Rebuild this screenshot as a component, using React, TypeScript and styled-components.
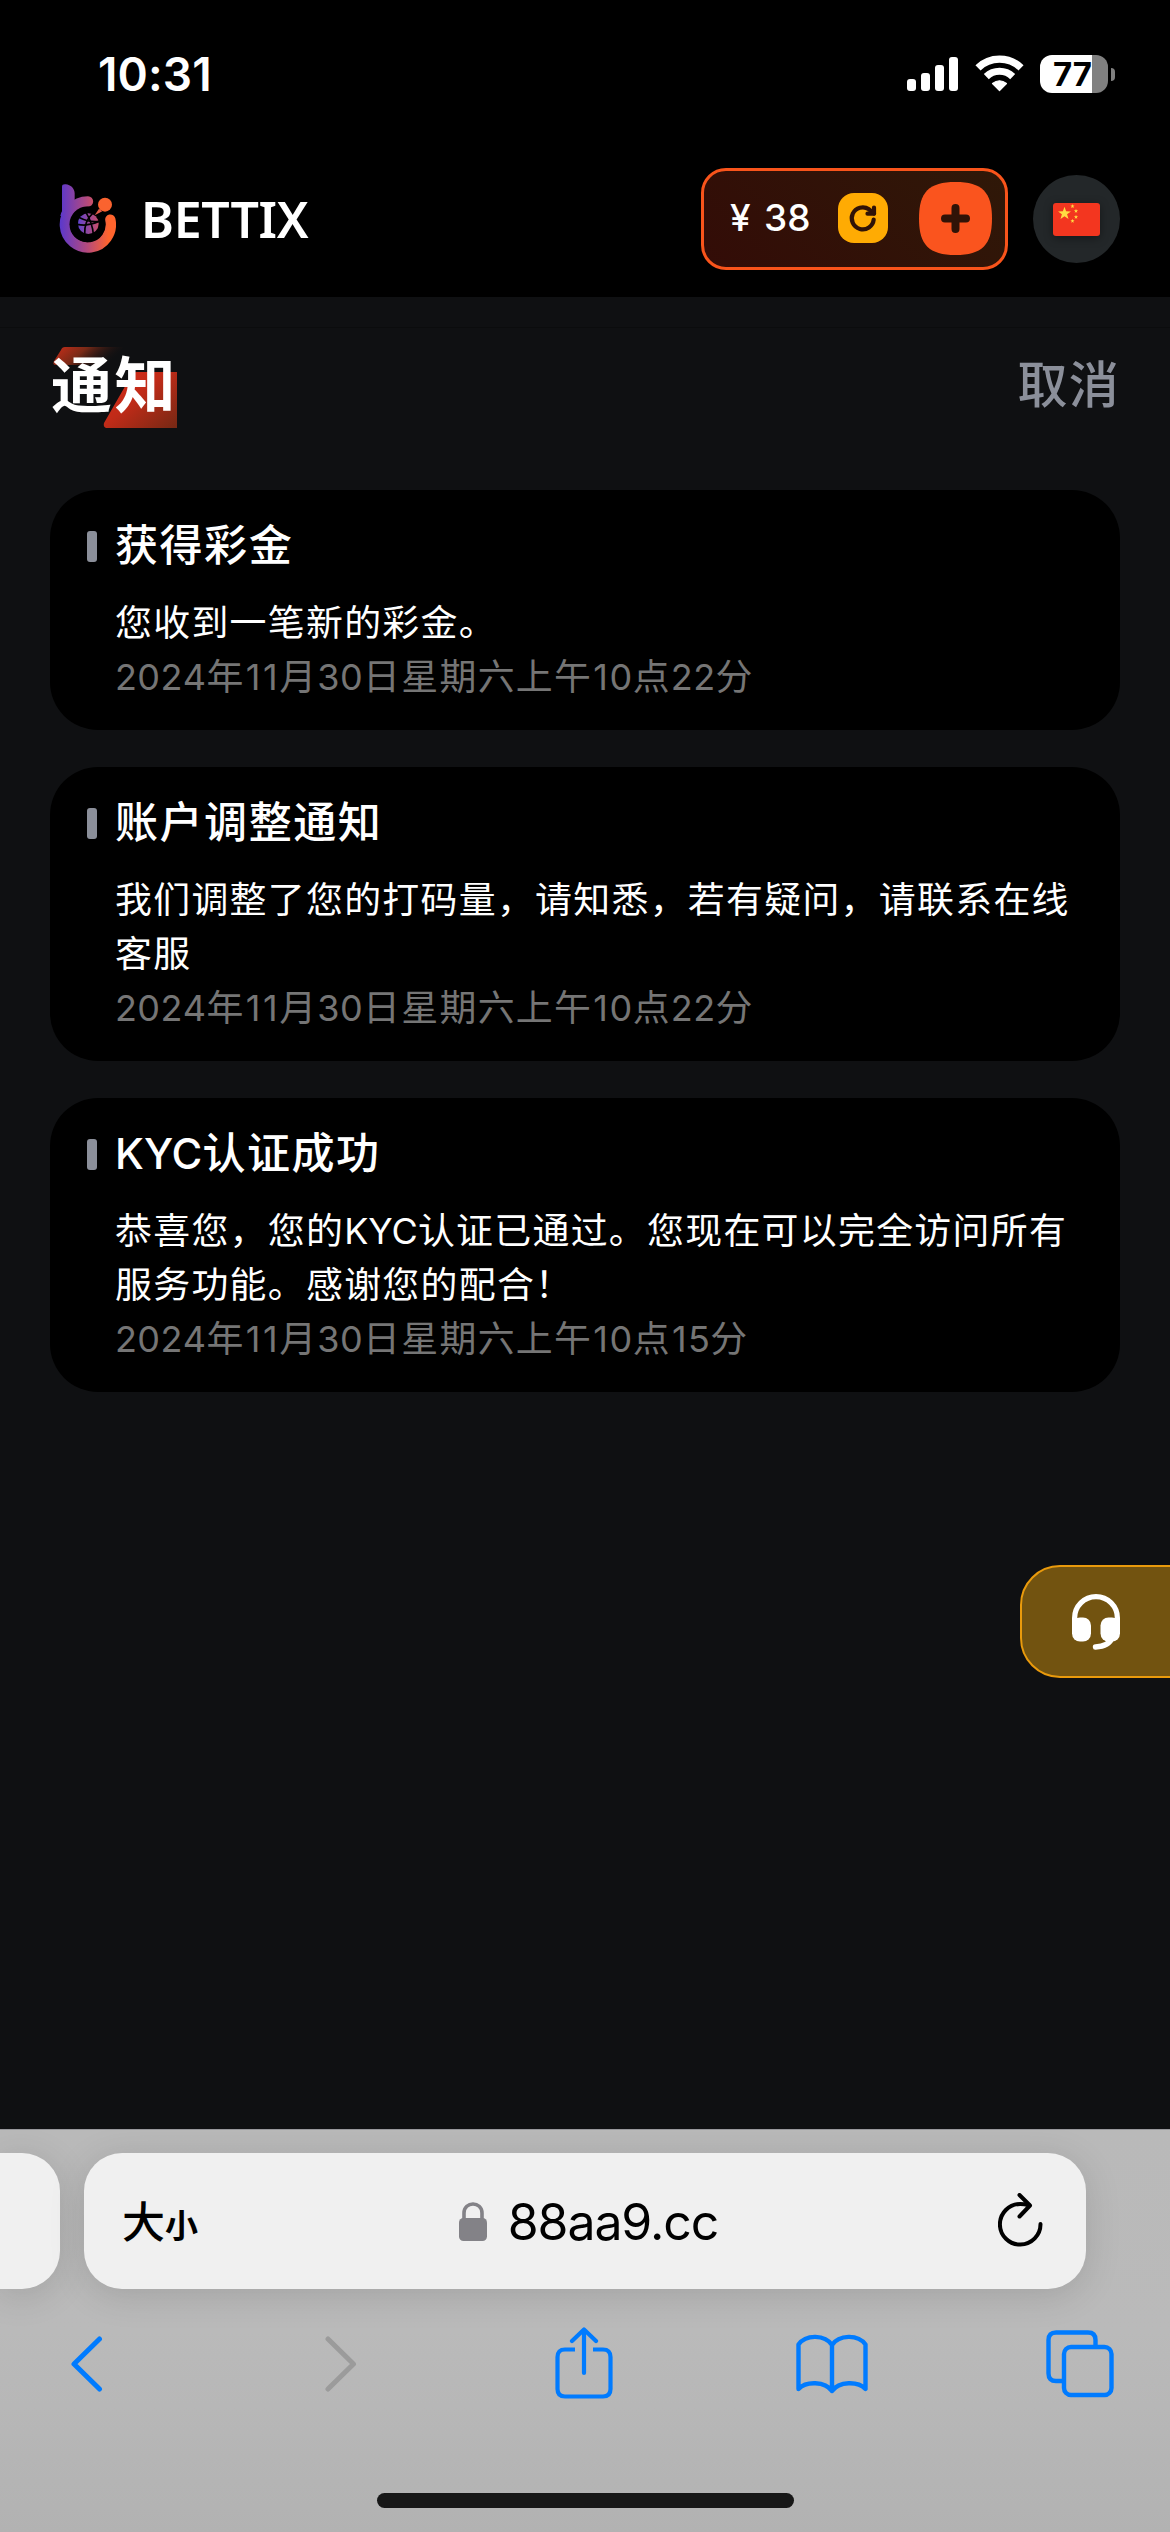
import React from "react";
import styled, { createGlobalStyle } from "styled-components";

const GlobalStyle = createGlobalStyle`
  *, *::before, *::after { box-sizing: border-box; }
  html, body { margin: 0; padding: 0; background: #0f1012; }
  body {
    font-family: Inter, "Noto Sans CJK SC", sans-serif;
    color: #fff;
    overflow: hidden;
  }
  svg { display: block; flex: none; }
`;

const Screen = styled.div`
  width: 1170px;
  height: 2532px;
  display: flex;
  flex-direction: column;
  background: #0f1012;
  overflow: hidden;
`;

const StatusBar = styled.div`
  height: 144px;
  flex: none;
  background: #000;
  display: flex;
  justify-content: space-between;
  padding: 0 55px 0 98px;
`;

const Clock = styled.div`
  padding-top: 46px;
  font-size: 46px;
  line-height: 56px;
  font-weight: 600;
  letter-spacing: 0.1px;
`;

const StatusIcons = styled.div`
  display: flex;
  align-items: flex-start;
  gap: 16.5px;
  padding-top: 55px;
`;

const BatteryWrap = styled.div`
  display: flex;
  align-items: center;
  gap: 3px;
`;

const Battery = styled.div`
  width: 68px;
  height: 38px;
  border-radius: 12px;
  background: linear-gradient(90deg, #fff 0 52px, #808080 52px);
  color: #000;
  font-size: 33px;
  line-height: 38px;
  font-weight: 700;
  padding-left: 13px;
`;

const BatteryCap = styled.div`
  width: 4px;
  height: 13px;
  border-radius: 0 5px 5px 0;
  background: #808080;
`;

const Header = styled.header`
  height: 153px;
  flex: none;
  background: #000;
  display: flex;
  align-items: flex-start;
  justify-content: space-between;
  padding: 24px 50px 0 59px;
`;

const Brand = styled.div`
  display: flex;
  align-items: center;
  gap: 25px;
  padding-top: 16px;
`;

const BrandName = styled.span`
  font-family: "Noto Sans", sans-serif;
  font-weight: 600;
  font-size: 50px;
  line-height: 68px;
  letter-spacing: -0.3px;
`;

const HeaderActions = styled.div`
  display: flex;
  align-items: center;
  gap: 25px;
`;

const Balance = styled.div`
  width: 307px;
  height: 102px;
  border: 3px solid #f9541b;
  border-radius: 25px;
  background: linear-gradient(45deg, #330c07, #2f1808);
  display: flex;
  align-items: center;
  justify-content: space-between;
  padding: 0 13px 2px 26px;
`;

const Amount = styled.span`
  font-size: 37px;
  line-height: 44px;
  font-weight: 550;
  white-space: pre;
  word-spacing: 3.5px;
  width: 92px;
`;

const BalanceButtons = styled.div`
  display: flex;
  align-items: center;
  gap: 31px;
`;

const Refresh = styled.div`
  width: 50px;
  height: 50px;
  border-radius: 16px;
  background: #ffab03;
`;

const Language = styled.div`
  width: 87px;
  height: 88px;
  border-radius: 50%;
  background: #232729;
  display: flex;
  align-items: center;
  justify-content: center;
`;

const Flag = styled.div`
  width: 47px;
  height: 33px;
  border-radius: 3px;
  overflow: hidden;
  background: #f3361f;
  box-shadow: 0 2px 10px rgba(0, 0, 0, 0.4);
`;

const Main = styled.main`
  flex: 1;
  padding: 0 50px;
  display: flex;
  flex-direction: column;
`;

const Hairline = styled.div`
  margin: 30px -50px 0;
  height: 1px;
  flex: none;
  background: #0b0c0d;
`;

const TitleRow = styled.div`
  height: 162px;
  flex: none;
  display: flex;
  align-items: flex-start;
  justify-content: space-between;
  padding-top: 19px;
`;

const TitleBox = styled.div`
  position: relative;
  width: 127px;
  height: 82px;
`;

const TitleArt = styled.svg`
  position: absolute;
  left: 0;
  top: 0;
`;

const Title = styled.h1`
  position: relative;
  margin: 0;
  padding-left: 1px;
  font-size: 61px;
  line-height: 78px;
  font-weight: 700;
  letter-spacing: 2.6px;
  white-space: nowrap;
`;

const Cancel = styled.span`
  font-size: 50px;
  line-height: 76px;
  font-weight: 500;
  letter-spacing: 1.2px;
  color: #8b8f9a;
`;

const CardList = styled.div`
  display: flex;
  flex-direction: column;
  gap: 37px;
`;

const Card = styled.article`
  border-radius: 48px;
  background: #000;
  padding: 28px 37px 26px;
`;

const CardHead = styled.div`
  display: flex;
  align-items: center;
  gap: 18px;
  height: 54px;
  margin-bottom: 24px;
`;

const Marker = styled.i`
  width: 10px;
  height: 31px;
  margin-top: 3px;
  border-radius: 3px;
  background: #8b8f9a;
`;

const CardTitle = styled.h2`
  margin: 0;
  padding-top: 1px;
  font-size: 42px;
  line-height: 54px;
  font-weight: 500;
`;

const CardLine = styled.p<{ $muted?: boolean }>`
  margin: 0 0 0 28px;
  height: 54px;
  font-size: 36px;
  line-height: 54px;
  letter-spacing: ${(p) => (p.$muted ? "0.4px" : "0")};
  font-kerning: ${(p) => (p.$muted ? "none" : "auto")};
  color: ${(p) => (p.$muted ? "#757575" : "#fff")};
  white-space: nowrap;
`;

const Han = styled.span<{ $space: number }>`
  font-size: 1.025em;
  line-height: 1;
  letter-spacing: ${(p) => p.$space}px;
`;

/* Inter's "1" is narrow; a little side bearing evens out the dates. */
const One = styled.span`
  padding: 0 1.1px;
`;

const Support = styled.button`
  position: absolute;
  left: 1020px;
  top: 1565px;
  width: 160px;
  height: 113px;
  display: flex;
  align-items: center;
  border: 2px solid #e99a0c;
  border-radius: 40px 0 0 40px;
  background: #725310;
  padding: 0 0 0 50px;
`;

const BrowserBar = styled.footer`
  height: 403px;
  flex: none;
  border-top: 1px solid #98989c;
  background: linear-gradient(#b9b9b9, #bababa 50%, #b2b2b2);
  overflow: hidden;
  display: flex;
  flex-direction: column;
`;

const AddressRow = styled.div`
  display: flex;
  gap: 24px;
  padding-top: 23px;
`;

const PrevTab = styled.div`
  width: 60px;
  height: 136px;
  border-radius: 0 38px 38px 0;
  background: #f0f0f0;
  box-shadow: 0 6px 36px rgba(0, 0, 0, 0.13);
`;

const Address = styled.div`
  width: 1002px;
  height: 136px;
  border-radius: 38px;
  background: #f0f0f0;
  box-shadow: 0 6px 36px rgba(0, 0, 0, 0.13);
  color: #000;
  display: flex;
  align-items: center;
  justify-content: space-between;
  padding: 0 43px 0 38px;
`;

const TextSize = styled.span`
  display: flex;
  align-items: baseline;
  font-weight: 500;
  font-size: 43px;
  line-height: 60px;
  width: 78px;
  padding-top: 5px;
  small { font-size: 33px; font-weight: 700; }
`;

const Domain = styled.span`
  display: flex;
  align-items: center;
  gap: 21px;
  margin-right: 21px;
  padding-top: 1px;
  font-size: 50px;
  line-height: 60px;
  letter-spacing: -1.1px;
`;

const Toolbar = styled.nav`
  display: flex;
  align-items: center;
  justify-content: space-between;
  height: 80px;
  margin-top: 35px;
  padding: 0 54px 0 52px;
`;

const HomeIndicator = styled.div`
  width: 417px;
  height: 15px;
  margin: 89px auto 0;
  border-radius: 8px;
  background: #171717;
`;

const SignalIcon = () => (
  <svg width="51" height="36" viewBox="0 0 51 36" fill="#fff">
    <rect x="0" y="24" width="9" height="12" rx="3" />
    <rect x="14" y="18" width="9" height="18" rx="3" />
    <rect x="28" y="10" width="9" height="26" rx="3" />
    <rect x="42" y="2" width="9" height="34" rx="3" />
  </svg>
);

const WifiIcon = () => (
  <svg width="49" height="37" viewBox="0 0 49 37" fill="none" stroke="#fff">
    <path d="M3 12.8A31 31 0 0 1 46 12.8" strokeWidth="7.4" />
    <path d="M11.3 21.6A19 19 0 0 1 37.7 21.6" strokeWidth="7.2" />
    <path d="M17.5 28.5Q24.500 23 31.500 28.500L24.500 35.500Z" fill="#fff" stroke="#fff" strokeWidth="1.200" strokeLinejoin="round" />
  </svg>
);

const LogoIcon = () => (
  <svg width="57" height="69" viewBox="57 464 171 207">
    <defs>
      <linearGradient id="brand" gradientUnits="userSpaceOnUse" x1="60" y1="0" x2="222" y2="0">
        <stop offset="0" stopColor="#5b38cc" />
        <stop offset=".5" stopColor="#b44a7d" />
        <stop offset=".9" stopColor="#ff642d" />
      </linearGradient>
      <linearGradient id="ball" x1="0" y1="0" x2="1" y2="0">
        <stop offset="0" stopColor="#6043d0" />
        <stop offset="1" stopColor="#c84d68" />
      </linearGradient>
    </defs>
    <path d="M66 472Q66 464 77 465C92 466 104 478 104 492V512L96 560H61Q62 552 66 546Z" fill="url(#brand)" />
    <path d="M144 516.500A69 69 0 1 0 211 571" fill="none" stroke="url(#brand)" strokeWidth="31" strokeLinecap="round" />
    <circle cx="142" cy="585" r="53.500" fill="#000" />
    <circle cx="145" cy="583" r="31" fill="url(#ball)" />
    <g fill="none" stroke="#000" strokeWidth="5">
      <path d="M112 585Q145 592 177 576" />
      <path d="M138 549Q158 583 160 615" />
      <path d="M158 552Q132 575 134 616" />
      <path d="M119 565Q150 580 178 576" />
    </g>
    <path d="M164 558L177 538L187 546Z" fill="#e05c48" />
    <circle cx="195" cy="526" r="21" fill="#fa632f" />
  </svg>
);

const RefreshIcon = () => (
  <svg width="50" height="50" viewBox="0 0 50 50" fill="none" stroke="#301307" strokeWidth="4.200" strokeLinecap="round" strokeLinejoin="round">
    <path d="M35.700 26.500A11 11 0 1 1 31 16.300L36 20.500" />
    <path d="M36 14.500V20.700H29.500" />
  </svg>
);

const PlusIcon = () => (
  <svg width="73" height="73" viewBox="0 0 73 73">
    <path d="M0 36.500C0 10 10 0 36.500 0S73 10 73 36.500S63 73 36.500 73S0 63 0 36.500Z" fill="#fa541e" />
    <path d="M36.500 26V47M26 36.500H47" stroke="#301307" strokeWidth="8" strokeLinecap="round" />
  </svg>
);

const star = (cx: number, cy: number, r: number) =>
  Array.from({ length: 10 }, (_, i) => {
    const a = -Math.PI / 2 + (i * Math.PI) / 5;
    const k = i % 2 ? r * 0.4 : r;
    return `${cx + k * Math.cos(a)},${cy + k * Math.sin(a)}`;
  }).join(" ");

const FlagStars = () => (
  <svg width="47" height="33" viewBox="0 0 47 33" fill="#ffdc42">
    <polygon points={star(11.5, 10.5, 6.8)} />
    <polygon points={star(19.5, 3.3, 2.2)} />
    <polygon points={star(23, 8, 2.2)} />
    <polygon points={star(23, 14, 2.2)} />
    <polygon points={star(19.5, 18, 2.2)} />
  </svg>
);

const HeadsetIcon = () => (
  <svg width="48" height="56" viewBox="0 0 48 56">
    <path d="M2.600 32V24A21.400 21.400 0 0 1 45.400 24V32" fill="none" stroke="#fff" strokeWidth="5.200" />
    <rect x="0" y="23.500" width="19" height="24" rx="8" fill="#fff" />
    <rect x="28.500" y="23.500" width="19.500" height="24" rx="8" fill="#fff" />
    <path d="M0 24H8V36H0ZM40 24H48V36H40Z" fill="#fff" />
    <path d="M40 44Q37 52 23.500 53" fill="none" stroke="#fff" strokeWidth="5.400" strokeLinecap="round" />
  </svg>
);

const LockIcon = () => (
  <svg width="28" height="40" viewBox="0 0 28 40">
    <path d="M5 18V11C5 -1 23 -1 23 11V18" fill="none" stroke="#838287" strokeWidth="3.600" />
    <rect x="0" y="16" width="28" height="23" rx="4.500" fill="#838287" />
  </svg>
);

const ReloadIcon = () => (
  <svg width="45" height="57" viewBox="0 0 45 57" fill="none" stroke="#000" strokeWidth="4" strokeLinecap="round" strokeLinejoin="round">
    <path d="M42.500 31A20.300 20.300 0 1 1 22.200 11Q26 11 31 12.200" />
    <path d="M21.500 2L32 12.500L21.500 23.500" />
  </svg>
);

const Chevron = ({ back }: { back?: boolean }) => (
  <svg width="72" height="56" viewBox="0 0 72 56" fill="none" stroke={back ? "#007bff" : "#9b9b9b"} strokeWidth="5" strokeLinecap="round" strokeLinejoin="round">
    <path d={back ? "M47.500 3L22 28L47.500 53" : "M28 3L53.500 28L28 53"} />
  </svg>
);

const ShareIcon = () => (
  <svg width="72" height="74" viewBox="-7 0 72 74" fill="none" stroke="#007bff" strokeWidth="4.200" strokeLinecap="round" strokeLinejoin="round">
    <path d="M20 22.500H10Q2.500 22.500 2.500 30V62Q2.500 69.500 10 69.500H48Q55.500 69.500 55.500 62V30Q55.500 22.500 48 22.500H38" strokeLinecap="butt" />
    <path d="M29 46V3M17 14L29 2.500L41 14" />
  </svg>
);

const BookIcon = () => (
  <svg width="72" height="60" viewBox="0 0 72 60" fill="none" stroke="#007bff" strokeWidth="4.400" strokeLinecap="round" strokeLinejoin="round">
    <path d="M36 11C29 0.500 10 0 2.500 10.500V55C10 47 29 47 36 57C43 47 62 47 69.500 55V10.500C62 0 43 0.500 36 11V57" />
  </svg>
);

const TabsIcon = () => (
  <svg width="72" height="68" viewBox="-2 0 72 68" fill="none" stroke="#007bff" strokeWidth="4.400">
    <path d="M16 51H10Q2.500 51 2.500 43.500V10Q2.500 2.500 10 2.500H42Q49.500 2.500 49.500 10V16" />
    <rect x="18" y="17" width="47.500" height="48" rx="7" />
  </svg>
);

/* Han runs are tracked slightly wider than Latin runs and digits. */
const Mixed = ({ text, space }: { text: string; space: number }) => (
  <>
    {text.split(/(1|[\x21-\x30\x32-\x7e]+)/).map((part, i) => {
      if (!part) return null;
      if (part === "1") return <One key={i}>1</One>;
      return i % 2 ? <React.Fragment key={i}>{part}</React.Fragment> : <Han key={i} $space={space}>{part}</Han>;
    })}
  </>
);

const notices = [
  { title: "获得彩金", lines: ["您收到一笔新的彩金。"], time: "2024年11月30日星期六上午10点22分" },
  {
    title: "账户调整通知",
    lines: ["我们调整了您的打码量，请知悉，若有疑问，请联系在线", "客服"],
    time: "2024年11月30日星期六上午10点22分",
  },
  {
    title: "KYC认证成功",
    lines: ["恭喜您，您的KYC认证已通过。您现在可以完全访问所有", "服务功能。感谢您的配合！"],
    time: "2024年11月30日星期六上午10点15分",
  },
];

export default function App() {
  return (
    <Screen>
      <GlobalStyle />
      <StatusBar>
        <Clock>10:31</Clock>
        <StatusIcons>
          <SignalIcon />
          <WifiIcon />
          <BatteryWrap>
            <Battery>77</Battery>
            <BatteryCap />
          </BatteryWrap>
        </StatusIcons>
      </StatusBar>
      <Header>
        <Brand>
          <LogoIcon />
          <BrandName>BETTIX</BrandName>
        </Brand>
        <HeaderActions>
          <Balance>
            <Amount>¥ 38</Amount>
            <BalanceButtons>
              <Refresh><RefreshIcon /></Refresh>
              <PlusIcon />
            </BalanceButtons>
          </Balance>
          <Language>
            <Flag><FlagStars /></Flag>
          </Language>
        </HeaderActions>
      </Header>
      <Main>
        <Hairline />
        <TitleRow>
          <TitleBox>
            <TitleArt width="127" height="82" viewBox="0 0 127 82">
              <defs>
                <linearGradient id="slashTop" x1="0" y1="0" x2="1" y2="0.300">
                  <stop offset="0" stopColor="#cc2d19" />
                  <stop offset="0.450" stopColor="#7a2a17" />
                  <stop offset="1" stopColor="#0f1012" stopOpacity="0" />
                </linearGradient>
                <linearGradient id="slashBottom" x1="0.100" y1="0.200" x2="1" y2="1">
                  <stop offset="0" stopColor="#d02b17" />
                  <stop offset="0.350" stopColor="#c12b18" />
                  <stop offset="1" stopColor="#752814" />
                </linearGradient>
              </defs>
              <path d="M15 0H73L62 18H6Q2 18 4 14L11 3Q12 0 15 0Z" fill="url(#slashTop)" />
              <path d="M87 25H127V81H56Q53 80 54 76L81 29Q83 25 87 25Z" fill="url(#slashBottom)" />
            </TitleArt>
            <Title>通知</Title>
          </TitleBox>
          <Cancel>取消</Cancel>
        </TitleRow>
        <CardList>
          {notices.map((n) => (
            <Card key={n.title}>
              <CardHead>
                <Marker />
                <CardTitle><Mixed text={n.title} space={1.5} /></CardTitle>
              </CardHead>
              {n.lines.map((l) => (
                <CardLine key={l}><Mixed text={l} space={1.3} /></CardLine>
              ))}
              <CardLine $muted><Mixed text={n.time} space={1.3} /></CardLine>
            </Card>
          ))}
        </CardList>
      </Main>
      <Support><HeadsetIcon /></Support>
      <BrowserBar>
        <AddressRow>
          <PrevTab />
          <Address>
            <TextSize>大<small>小</small></TextSize>
            <Domain><LockIcon />88aa9.cc</Domain>
            <ReloadIcon />
          </Address>
        </AddressRow>
        <Toolbar>
          <Chevron back />
          <Chevron />
          <ShareIcon />
          <BookIcon />
          <TabsIcon />
        </Toolbar>
        <HomeIndicator />
      </BrowserBar>
    </Screen>
  );
}
